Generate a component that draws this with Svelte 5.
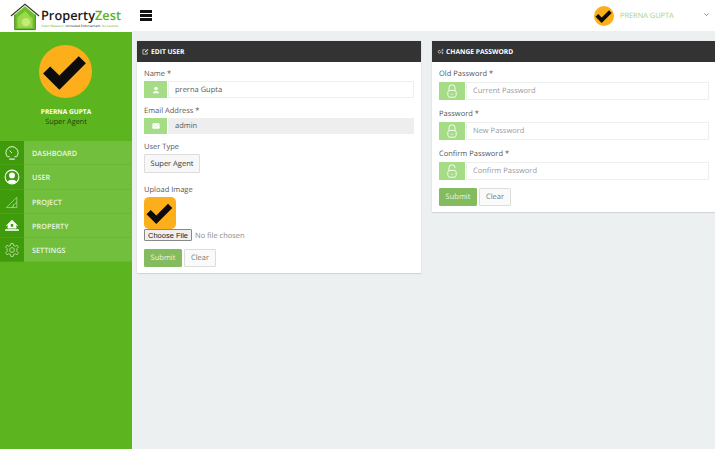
<script>
	const menu = [
		{ label: "DASHBOARD", icon: "gauge" },
		{ label: "USER", icon: "user" },
		{ label: "PROJECT", icon: "project" },
		{ label: "PROPERTY", icon: "property" },
		{ label: "SETTINGS", icon: "gear" }
	];

	const passwords = [
		{ label: "Old Password *", hint: "Current Password", open: false },
		{ label: "Password *", hint: "New Password", open: false },
		{ label: "Confirm Password *", hint: "Confirm Password", open: true }
	];
</script>

{#snippet check()}
	<svg viewBox="0 0 52 52" class="check"><path d="M4 28 L11 21 L20 30 L39 11 L46 18 L20 44 Z" fill="#0c0c0c" /></svg>
{/snippet}

{#snippet lock(open)}
	<svg viewBox="1.5 0.5 13 18.5" class="lock" fill="none" stroke="#fff" stroke-width="1.2">
		{#if open}
			<path d="M4 9 V5.5 a4 4 0 0 1 8 0 V6" />
		{:else}
			<path d="M4 9 V5.5 a4 4 0 0 1 8 0 V9" />
		{/if}
		<rect x="2.5" y="9" width="11" height="9" rx="2.5" />
		<circle cx="8" cy="14" r="0.8" fill="#fff" stroke="none" />
	</svg>
{/snippet}

<div class="page">
	<aside class="sidebar">
		<div class="logo">
			<svg viewBox="0 0 32 30" class="house">
				<path d="M5 13 L16 4 L27 13 V29 H5 Z" fill="#6fbf2c" />
				<path d="M8 16 L16 9 L24 17 V27 H8 Z" fill="#9bd94c" />
				<circle cx="17" cy="21" r="4.5" fill="#c4ea78" />
				<path d="M1 14.5 L16 2 L31 14.5" fill="none" stroke="#2f3a24" stroke-width="1.2" />
				<path d="M5 13 V29 H27 V13" fill="none" stroke="#3c7d18" stroke-width="1" />
			</svg>
			<div class="brand">
				<div class="wordmark">Property<span>Zest</span></div>
				<div class="tagline"><span class="g">Smart Research.</span> Unrivalled Endorsement. <span class="g">No Lemons.</span></div>
			</div>
		</div>
		<div class="profile">
			<div class="avatar">{@render check()}</div>
			<div class="name">PRERNA GUPTA</div>
			<div class="role">Super Agent</div>
		</div>
		<nav>
			{#each menu as item}
				<div class="nav-row">
					<span class="nav-icon">
						{#if item.icon === "gauge"}
							<svg viewBox="0 0 20 20" fill="none" stroke="#fff" stroke-width="1.1">
								<path d="M4.2 14.6 A7.6 7.6 0 1 1 15.8 14.6" />
								<path d="M4.2 14.6 H7 M13 14.6 H15.8" />
								<path d="M10 10 L7 7" />
								<path d="M6.5 17.6 H13.5" stroke-width="1.4" />
							</svg>
						{:else if item.icon === "user"}
							<svg viewBox="0 0 20 20">
								<circle cx="10" cy="10" r="8.6" fill="none" stroke="#fff" stroke-width="1.3" />
								<circle cx="10" cy="8" r="3.6" fill="#fff" />
								<path d="M4.5 16 C5 12.5 15 12.5 15.5 16 A8 8 0 0 1 4.5 16 Z" fill="#fff" />
							</svg>
						{:else if item.icon === "project"}
							<svg viewBox="0 0 20 20" fill="none" stroke="#b7dfa0" stroke-width="0.9">
								<path d="M3 17 L16 4 V17 Z" />
								<path d="M9 17 L16 10" />
								<path d="M12 17 V13" />
							</svg>
						{:else if item.icon === "property"}
							<svg viewBox="0 0 20 20" fill="#fff">
								<path d="M10 3 L15.5 8 V13 H4.5 V8 Z" />
								<path d="M2.5 10 L10 2.5 L17.5 10" fill="none" stroke="#fff" stroke-width="0.9" />
								<rect x="1.5" y="14" width="17" height="2" />
								<rect x="8.5" y="7.5" width="3" height="3.5" fill="#3f9a0c" />
							</svg>
						{:else}
							<svg viewBox="0 0 20 20" fill="none" stroke="#c9e8b5" stroke-width="1">
								<circle cx="10" cy="10" r="3" />
								<path d="M8.5 2 H11.5 L12 4.4 L14.2 5.3 L16.2 4 L18 6.4 L16.2 8.2 V11.8 L18 13.6 L16.2 16 L14.2 14.7 L12 15.6 L11.5 18 H8.5 L8 15.6 L5.8 14.7 L3.8 16 L2 13.6 L3.8 11.8 V8.2 L2 6.4 L3.8 4 L5.8 5.3 L8 4.4 Z" />
							</svg>
						{/if}
					</span>
					<span class="nav-label">{item.label}</span>
				</div>
			{/each}
		</nav>
	</aside>

	<div class="content">
		<header class="topbar">
			<div class="burger"><i></i><i></i><i></i></div>
			<div class="account">
				<div class="mini">{@render check()}</div>
				<span>PRERNA GUPTA</span>
				<svg viewBox="0 0 10 6" class="caret"><path d="M1 1 L5 5 L9 1" fill="none" stroke="#555" stroke-width="1.4" /></svg>
			</div>
		</header>

		<main>
			<section class="card">
				<h2>
					<svg viewBox="0 0 12 12" class="head-icon" fill="none" stroke="#fff" stroke-width="1.1">
						<path d="M9 7 V10.5 H1.5 V3 H6" />
						<path d="M5 7.5 L5.5 5.5 L10 1.5 L11 2.5 L6.8 7 Z" fill="#fff" stroke="none" />
					</svg>
					EDIT USER
				</h2>
				<div class="body">
					<label for="name">Name *</label>
					<div class="field">
						<span class="addon">
							<svg viewBox="0 0 12 12" class="solid"><circle cx="6" cy="3.6" r="2.6" fill="#fff" /><path d="M1.5 11 C1.5 6.5 10.5 6.5 10.5 11 Z" fill="#fff" /></svg>
						</span>
						<input id="name" value="prerna Gupta" />
					</div>
					<label for="email">Email Address *</label>
					<div class="field short">
						<span class="addon">
							<svg viewBox="0 0 12 12" class="solid"><rect x="0.5" y="2" width="11" height="8" rx="1" fill="#fff" /><path d="M1 3 L6 7 L11 3" fill="none" stroke="#a5dc86" stroke-width="0.7" /></svg>
						</span>
						<input id="email" class="locked" value="admin" readonly />
					</div>
					<label for="type">User Type</label>
					<button id="type" class="btn plain dark">Super Agent</button>
					<label for="upload" class="upload-label">Upload Image</label>
					<div class="thumb">{@render check()}</div>
					<input id="upload" class="file" type="file" />
					<div class="actions">
						<button class="btn primary">Submit</button>
						<button class="btn plain">Clear</button>
					</div>
				</div>
			</section>

			<section class="card pass">
				<h2>
					<svg viewBox="0 0 14 12" class="head-icon" fill="none" stroke="#fff">
						<circle cx="5" cy="6.5" r="2.6" stroke-width="1.8" stroke-dasharray="1.5 0.6" />
						<circle cx="11" cy="3" r="1.4" stroke-width="1.1" />
						<circle cx="11" cy="9" r="1.4" stroke-width="1.1" />
					</svg>
					CHANGE PASSWORD
				</h2>
				<div class="body">
					{#each passwords as p, i}
						<label class="pw-label" for={"pw" + i}>{p.label}</label>
						<div class="field tall">
							<span class="addon wide">{@render lock(p.open)}</span>
							<input id={"pw" + i} type="password" placeholder={p.hint} />
						</div>
					{/each}
					<div class="actions">
						<button class="btn primary">Submit</button>
						<button class="btn plain">Clear</button>
					</div>
				</div>
			</section>
		</main>
	</div>
</div>

<style>
	:global(body) {
		margin: 0;
		font-family: "Open Sans", "Liberation Sans", sans-serif;
		background: #ecf0f1;
		text-rendering: geometricPrecision;
	}

	input,
	button {
		text-rendering: geometricPrecision;
	}

	.page {
		display: flex;
		min-height: 449px;
		overflow: hidden;
	}

	.sidebar {
		width: 132px;
		flex: none;
		background: #5cb51f;
		color: #fff;
	}

	.logo {
		height: 32px;
		background: #fff;
		display: flex;
		align-items: center;
		padding-left: 10px;
		gap: 1px;
		box-sizing: border-box;
	}

	.house {
		width: 30px;
		height: 29px;
		flex: none;
	}

	.brand {
		padding-top: 3px;
	}

	.wordmark {
		font-size: 12.8px;
		font-weight: 600;
		line-height: 18px;
		color: #1a1a1a;
	}

	.wordmark span {
		color: #5cb51f;
	}

	.tagline {
		font-size: 3.1px;
		line-height: 5px;
		white-space: nowrap;
		color: #222;
	}

	.g {
		color: #5cb51f;
	}

	.profile {
		height: 109px;
		display: flex;
		flex-direction: column;
		align-items: center;
		padding-top: 13px;
		box-sizing: border-box;
	}

	.avatar {
		width: 53px;
		height: 53px;
		border-radius: 50%;
		background: #fdae1b;
		display: flex;
		margin: 0 1px 8px 0;
	}

	.check {
		width: 100%;
		height: 100%;
	}

	.name {
		font-size: 6.6px;
		font-weight: 700;
		line-height: 11px;
	}

	.role {
		font-size: 7.3px;
		line-height: 10px;
		color: #1f3d0a;
	}

	.nav-row {
		height: 24.3px;
		display: flex;
		align-items: stretch;
		background: #72bf3e;
		box-shadow: inset 0 -1px 0 #69b934;
	}

	.nav-icon {
		width: 24px;
		flex: none;
		background: #3f9a0c;
		display: flex;
		align-items: center;
		justify-content: center;
		box-shadow: inset 0 -1px 0 #4aa31a;
	}

	.nav-icon svg {
		width: 16px;
		height: 16px;
	}

	.nav-label {
		padding: 1px 0 0 8px;
		font-size: 7.3px;
		font-weight: 600;
		line-height: 24px;
		color: #e9f6df;
	}

	.content {
		flex: 1;
		min-width: 0;
	}

	.topbar {
		height: 32px;
		background: #fff;
		display: flex;
		align-items: center;
		justify-content: space-between;
		padding: 0 6px 0 8px;
		box-sizing: border-box;
		border-bottom: 1px solid #eef0f0;
	}

	.burger {
		width: 12px;
		display: flex;
		flex-direction: column;
		gap: 1.8px;
	}

	.burger i {
		height: 2.4px;
		background: #111;
	}

	.account {
		display: flex;
		align-items: center;
		font-size: 7.4px;
		color: #a5d27c;
	}

	.mini {
		width: 20px;
		height: 20px;
		border-radius: 50%;
		background: #fdae1b;
		margin-right: 6px;
	}

	.account span {
		width: 84px;
	}

	.caret {
		width: 5px;
		height: 3px;
		margin-bottom: 3px;
	}

	main {
		display: flex;
		align-items: flex-start;
		gap: 11px;
		padding: 9px 0 0 5px;
	}

	.card {
		width: 284px;
		flex: none;
		background: #fff;
		box-shadow: 0 0 1px #c8cdce, 0 1px 1px #d4d8d9;
	}

	.pass {
		width: 283px;
	}

	.pass .body {
		padding-right: 6px;
	}

	h2 {
		margin: 0;
		height: 21px;
		box-sizing: border-box;
		background: #333;
		color: #fff;
		font-size: 6.7px;
		font-weight: 700;
		padding-left: 5px;
		display: flex;
		align-items: center;
		gap: 2px;
	}

	.head-icon {
		width: 7px;
		height: 7px;
		flex: none;
	}

	.body {
		padding: 6px 7px;
		display: flex;
		flex-direction: column;
		align-items: flex-start;
	}

	label {
		font-size: 7.5px;
		line-height: 11px;
		color: #555;
		padding-top: 1px;
		margin-bottom: 1px;
	}

	.pw-label {
		margin-bottom: 2px;
	}

	.field {
		display: flex;
		align-self: stretch;
		height: 17px;
		margin-bottom: 7px;
	}

	.field.short {
		height: 16px;
		margin-bottom: 7px;
	}

	.field.tall {
		height: 18px;
		margin-bottom: 8px;
	}

	.addon {
		width: 23px;
		flex: none;
		background: #a5dc86;
		display: flex;
		align-items: center;
		justify-content: center;
		margin-right: 1px;
	}

	.addon.wide {
		width: 26px;
	}

	.solid {
		width: 8px;
		height: 8px;
	}

	.lock {
		width: 10px;
		height: 14px;
	}

	input:not(.file) {
		flex: 1;
		min-width: 0;
		box-sizing: border-box;
		border: 1px solid #eef0f0;
		padding: 0 6px;
		font: inherit;
		font-size: 7.5px;
		color: #555;
		outline: none;
		background: #fff;
	}

	input::placeholder {
		color: #999;
		opacity: 1;
	}

	.locked {
		background: #eeeeee !important;
	}

	.btn {
		font: inherit;
		font-size: 7.5px;
		border-radius: 1px;
		box-sizing: border-box;
		padding: 0;
		height: 18px;
	}

	.plain {
		background: #fafafa;
		border: 1px solid #ddd;
		color: #777;
		width: 32px;
	}

	.plain.dark {
		width: 56px;
		height: 19px;
		color: #333;
		margin-bottom: 10px;
		background: #f7f7f7;
	}

	.primary {
		background: #85bb5f;
		border: 1px solid #85bb5f;
		color: #eaf5df;
		width: 38px;
	}

	.upload-label {
		margin: 1px 0 1px;
	}

	.thumb {
		width: 32px;
		height: 32px;
		border-radius: 5px;
		background: #fdae1b;
	}

	.file {
		font-family: "Open Sans", "Liberation Sans", sans-serif;
		font-size: 7.5px;
		color: #888;
		height: 12px;
		width: 130px;
		margin-bottom: 8px;
		padding: 0;
	}

	.file::file-selector-button {
		font-family: "Liberation Sans", Arial, sans-serif;
		font-size: 7.5px;
		color: #222;
		width: 48px;
		height: 12px;
		padding: 0;
		margin: 0 3px 0 0;
		background: #efefef;
		border: 1px solid #888;
		border-radius: 1px;
	}

	.actions {
		display: flex;
		gap: 2px;
	}
</style>
